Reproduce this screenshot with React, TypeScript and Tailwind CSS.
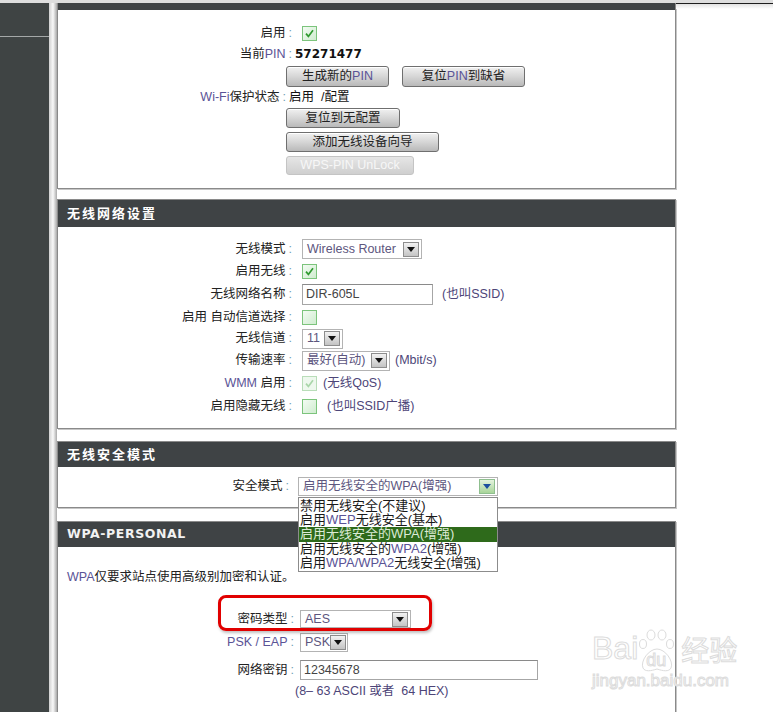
import * as React from "react";

// ─────────────────────────────────────────────
// Small building blocks
// ─────────────────────────────────────────────
const Colon = () => <span className="ml-[3px] text-[#6f9db5]">:</span>;

const Lat = ({ children }: { children: React.ReactNode }) => (
  <span className="text-[#5a5396]">{children}</span>
);

function Row({
  label,
  children,
  h = "h-[22px]",
  lw = "w-[234px]",
  gap = "ml-[10px]",
}: {
  label: React.ReactNode;
  children?: React.ReactNode;
  h?: string;
  lw?: string;
  gap?: string;
}) {
  return (
    <div className={`flex items-center ${h}`}>
      <div className={`${lw} flex justify-end items-center text-[#222] whitespace-nowrap`}>
        {label}
        <Colon />
      </div>
      <div className={`${gap} flex items-center whitespace-nowrap`}>{children}</div>
    </div>
  );
}

function CheckBox({ checked, disabled }: { checked?: boolean; disabled?: boolean }) {
  return (
    <span
      className={`w-[15px] h-[15px] border flex items-center justify-center ${
        disabled ? "border-[#b9ddb9] bg-[#eef8ee]" : "border-[#7cc47c] bg-gradient-to-br from-[#f3fbf3] to-[#cfeccf]"
      }`}
    >
      {checked && (
        <svg width="11" height="11" viewBox="0 0 11 11">
          <path
            d="M2 5.6 L4.4 8.4 L9 2.2"
            fill="none"
            stroke={disabled ? "#a9d6a9" : "#2f9a2f"}
            strokeWidth="1.7"
          />
        </svg>
      )}
    </span>
  );
}

function Arrow({ green }: { green?: boolean }) {
  return (
    <span
      className={`w-[16px] h-[15px] shrink-0 border flex items-center justify-center ${
        green
          ? "border-[#8fbf8f] bg-gradient-to-b from-[#e4f3de] to-[#a8d499]"
          : "border-[#8d8d8d] bg-gradient-to-b from-[#f2f2f2] to-[#c4c4c4]"
      }`}
    >
      <svg width="8" height="5" viewBox="0 0 8 5">
        <path d="M0 0 H8 L4 5 Z" fill={green ? "#1d4f9f" : "#111"} />
      </svg>
    </span>
  );
}

function Select({
  value,
  w,
  h = "h-[20px]",
  green,
}: {
  value: React.ReactNode;
  w: string;
  h?: string;
  green?: boolean;
}) {
  return (
    <div className={`${w} ${h} border border-[#b3b3b3] bg-white flex items-center justify-between pl-[4px] pr-[2px]`}>
      <span className="text-[#5d567e] whitespace-nowrap">{value}</span>
      <Arrow green={green} />
    </div>
  );
}

function Btn({ children, w, h = "h-[20px]", disabled }: { children: React.ReactNode; w: string; h?: string; disabled?: boolean }) {
  return (
    <div
      className={`${w} ${h} rounded-[3px] border flex items-center justify-center whitespace-nowrap ${
        disabled
          ? "border-[#c4c4c4] bg-gradient-to-b from-[#e6e6e6] to-[#cfcfcf] text-[#f7f7f7]"
          : "border-[#6f6f6f] bg-gradient-to-b from-[#f1f1f1] via-[#d6d6d6] to-[#b9b9b9] text-[#222] shadow-[inset_0_1px_0_#fff]"
      }`}
    >
      {children}
    </div>
  );
}

function Panel({
  title,
  children,
  head = "h-[25px]",
  top = true,
}: {
  title?: React.ReactNode;
  children: React.ReactNode;
  head?: string;
  top?: boolean;
}) {
  return (
    <section
      className={`border-x border-b border-[#8a8a8a] shadow-[1px_1px_0_#c6c6c6] bg-white ${top ? "border-t" : ""}`}
    >
      <div
        className={`${head} bg-[#3f4345] flex items-center pl-[9px] text-[13px] font-bold tracking-[2px] text-white`}
      >
        {title}
      </div>
      {children}
    </section>
  );
}

// ─────────────────────────────────────────────
// Page
// ─────────────────────────────────────────────
export default function App() {
  const modes = [
    { t: <>禁用无线安全(不建议)</> },
    { t: <>启用<Lat>WEP</Lat>无线安全(基本)</> },
    { t: <>启用无线安全的WPA(增强)</>, on: true },
    { t: <>启用无线安全的<Lat>WPA2</Lat>(增强)</> },
    { t: <>启用<Lat>WPA/WPA2</Lat>无线安全(增强)</> },
  ];

  return (
    <div className="relative w-[773px] h-[712px] overflow-hidden bg-white text-[12.5px] leading-none font-['Liberation_Sans','Noto_Sans_CJK_SC',sans-serif]">
      {/* top band */}
      <div className="h-[3px] bg-[#dedede]" />

      <div className="flex h-[709px]">
        {/* sidebar */}
        <aside className="w-[49px] bg-[#3f4444] flex flex-col">
          <div className="h-[33px]" />
          <div className="h-[1px] bg-[#a4a8a8]" />
        </aside>
        <div className="w-[8px] bg-gradient-to-r from-[#cfcfcf] via-[#fafafa] to-[#a9a9a9]" />

        {/* main column */}
        <main className="w-[619px] flex flex-col">
          {/* WPS panel */}
          <Panel head="h-[7px]" top={false}>
            <div className="pt-[12px] pb-[13px]">
              <Row label="启用">
                <CheckBox checked />
              </Row>
              <Row label={<>当前<Lat>PIN</Lat></>} h="h-[20px]" gap="ml-[3px]">
                <span className="font-['DejaVu_Sans',sans-serif] font-bold text-[12px] text-[#111]">57271477</span>
              </Row>
              <div className="mt-[2px] pl-[228px] flex gap-[13px]">
                <Btn w="w-[103px]" h="h-[21px]">生成新的<Lat>PIN</Lat></Btn>
                <Btn w="w-[123px]" h="h-[21px]">复位<Lat>PIN</Lat>到缺省</Btn>
              </div>
              <Row label={<><Lat>Wi-Fi</Lat>保护状态</>} h="h-[20px]" lw="w-[228px]" gap="ml-[3px]">
                <span className="text-[#111]">启用 &nbsp;/配置</span>
              </Row>
              <div className="mt-[1px] pl-[228px]">
                <Btn w="w-[114px]">复位到无配置</Btn>
              </div>
              <div className="mt-[4px] pl-[228px]">
                <Btn w="w-[153px]">添加无线设备向导</Btn>
              </div>
              <div className="mt-[4px] pl-[228px]">
                <Btn w="w-[128px]" h="h-[19px]" disabled>WPS-PIN UnLock</Btn>
              </div>
            </div>
          </Panel>

          {/* wireless settings */}
          <div className="mt-[10px]">
            <Panel title="无线网络设置" head="h-[27px]">
              <div className="pt-[11px] pb-[11px]">
                <Row label="无线模式">
                  <Select value="Wireless Router" w="w-[120px]" />
                </Row>
                <Row label="启用无线" h="h-[23px]">
                  <CheckBox checked />
                </Row>
                <Row label="无线网络名称" h="h-[23px]">
                  <div className="w-[131px] h-[21px] border border-[#a6a6a6] border-t-[#8a8a8a] flex items-center pl-[3px] text-[#444]">
                    DIR-605L
                  </div>
                  <span className="ml-[9px] text-[#4d4578]">(也叫SSID)</span>
                </Row>
                <Row label="启用 自动信道选择">
                  <CheckBox />
                </Row>
                <Row label="无线信道" h="h-[21px]">
                  <Select value="11" w="w-[41px]" />
                </Row>
                <Row label="传输速率" h="h-[23px]">
                  <Select value="最好(自动)" w="w-[88px]" />
                  <span className="ml-[5px] text-[#4d4578]">(Mbit/s)</span>
                </Row>
                <Row label={<><Lat>WMM</Lat>&nbsp;启用</>} h="h-[23px]">
                  <CheckBox checked disabled />
                  <span className="ml-[6px] text-[#4d4578]">(无线QoS)</span>
                </Row>
                <Row label="启用隐藏无线">
                  <CheckBox />
                  <span className="ml-[10px] text-[#4d4578]">(也叫SSID广播)</span>
                </Row>
              </div>
            </Panel>
          </div>

          {/* security mode */}
          <div className="mt-[12px] relative z-10">
            <Panel title="无线安全模式">
              <div className="pt-[9px] pb-[10px]">
                <Row label="安全模式" h="h-[21px]" lw="w-[231px]" gap="ml-[9px]">
                  <div className="relative">
                    <Select value="启用无线安全的WPA(增强)" w="w-[200px]" h="h-[19px]" green />
                    <ul className="absolute left-0 top-[20px] w-[200px] border border-[#8c8c8c] bg-white py-[1px] text-[13px] leading-[14.2px] text-[#1a1a1a]">
                      {modes.map((m, i) => (
                        <li
                          key={i}
                          className={`px-[1px] whitespace-nowrap ${m.on ? "bg-[#2e6a1b] text-[#dcebd6]" : ""}`}
                        >
                          {m.t}
                        </li>
                      ))}
                    </ul>
                  </div>
                </Row>
              </div>
            </Panel>
          </div>

          {/* WPA personal */}
          <div className="mt-[13px]">
            <Panel
              title={<span className="font-['DejaVu_Sans',sans-serif] text-[12.5px] tracking-[0.6px] text-[#f2f2f2]">WPA-PERSONAL</span>}
            >
              <div className="pt-[20px] pb-[20px]">
                <div className="h-[20px] flex items-center pl-[9px] text-[#222]">
                  <Lat>WPA</Lat>仅要求站点使用高级别加密和认证。
                </div>
                <div className="mt-[21px]">
                  <Row label="密码类型" lw="w-[236px]" gap="ml-[6px]">
                    <Select value="AES" w="w-[111px]" h="h-[18px]" />
                  </Row>
                </div>
                <Row label={<Lat>PSK / EAP</Lat>} h="h-[24px]" lw="w-[236px]" gap="ml-[6px]">
                  <Select value="PSK" w="w-[48px]" h="h-[19px]" />
                </Row>
                <div className="mt-[5px]">
                  <Row label="网络密钥" lw="w-[236px]" gap="ml-[6px]">
                    <div className="w-[238px] h-[20px] border border-[#a6a6a6] border-t-[#8a8a8a] flex items-center pl-[3px] text-[#444]">
                      12345678
                    </div>
                  </Row>
                </div>
                <div className="h-[21px] flex items-center pl-[237px] text-[#4d4578]">
                  (8– 63 ASCII 或者 &nbsp;64 HEX)
                </div>
              </div>
            </Panel>
          </div>
        </main>

        {/* right blank area */}
        <div className="flex-1 flex flex-col">
          <div className="h-[1px] bg-[#1e1e1e]" />
          <div className="h-[5px] bg-gradient-to-b from-[#e2e2e2] to-white" />
        </div>
      </div>

      {/* red annotation box */}
      <div className="absolute left-[218px] top-[595px] w-[214px] h-[36px] rounded-[8px] border-[3px] border-[#e10000] shadow-[1px_2px_3px_rgba(0,0,0,0.25)]" />

      {/* watermark */}
      <div className="absolute left-[592px] top-[629px] pointer-events-none text-white [-webkit-text-stroke:1px_#dcdcdc] font-['Liberation_Sans',sans-serif]">
        <div className="flex items-end">
          <span className="text-[32px] leading-[32px] mb-[9px]">Bai</span>
          <div className="relative w-[38px] h-[44px]">
            <svg width="38" height="44" viewBox="0 0 38 44" className="absolute inset-0">
              <g fill="#fff" stroke="#dcdcdc" strokeWidth="1">
                <ellipse cx="5" cy="15" rx="3.5" ry="4.5" />
                <ellipse cx="13" cy="6" rx="4" ry="5" />
                <ellipse cx="24" cy="6" rx="4" ry="5" />
                <ellipse cx="32" cy="15" rx="3.5" ry="4.5" />
                <path d="M19 20 C27 20 36 32 33 39 C31 43 25 42 19 40 C13 42 7 43 5 39 C2 32 11 20 19 20 Z" />
              </g>
            </svg>
            <span className="absolute left-[8px] top-[22px] text-[18px] leading-[18px]">du</span>
          </div>
          <span className="ml-[5px] text-[28px] leading-[28px] mb-[10px] font-['Noto_Sans_CJK_SC',sans-serif]">经验</span>
        </div>
        <div className="text-[17px] leading-[17px] -mt-[1px]">jingyan.baidu.com</div>
      </div>
    </div>
  );
}
